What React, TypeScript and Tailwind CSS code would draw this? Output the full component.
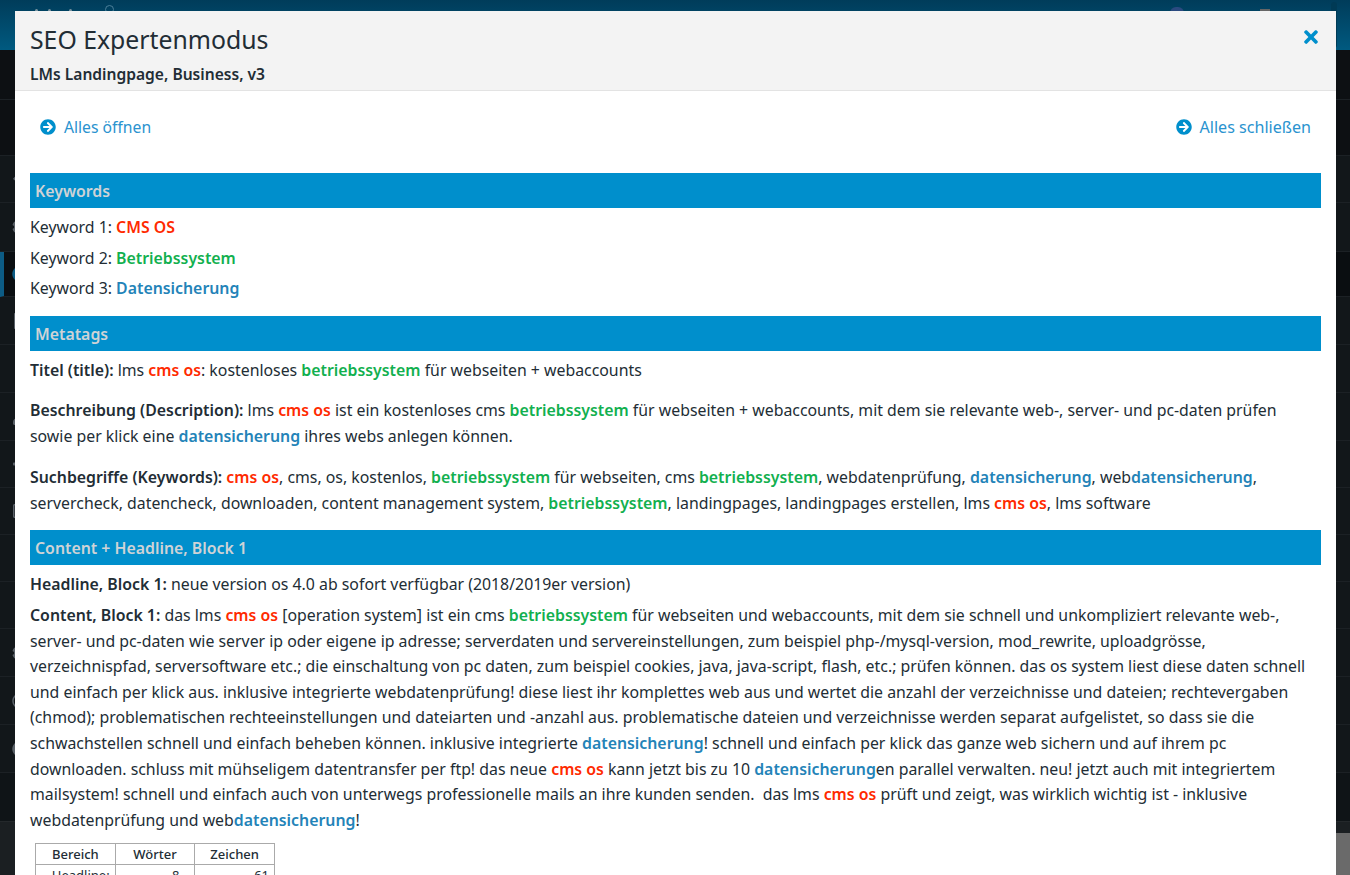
import type { ReactNode } from 'react'
import { FaArrowCircleRight, FaTimes, FaCog, FaUser, FaRegSquare, FaFile, FaCaretLeft, FaArrowUp, FaCircle, FaRegCircle, FaMinus } from 'react-icons/fa'

function Red({ children }: { children: ReactNode }) {
  return <b className="font-semibold text-[#ff2a00]">{children}</b>
}
function Green({ children }: { children: ReactNode }) {
  return <b className="font-semibold text-[#12b04f]">{children}</b>
}
function Blue({ children }: { children: ReactNode }) {
  return <b className="font-semibold text-[#2383b8]">{children}</b>
}

function SectionBar({ title }: { title: string }) {
  return (
    <div className="flex h-[35px] items-center bg-[#008fcc] px-[5px] pt-[3px] text-[15.85px] font-semibold text-[#cfd3d6]">
      {title}
    </div>
  )
}

const navItems = [
  { icon: <FaArrowUp />, h: 'h-[47px]' },
  { icon: <FaCog />, h: 'h-[49px]' },
  { icon: <FaCircle className="text-[#0c5c85]" />, h: 'h-[45px]', active: true },
  { icon: <FaFile />, h: 'h-[48px]' },
  { icon: <FaCaretLeft />, h: 'h-[48px]' },
  { icon: <FaUser />, h: 'h-[48px]' },
  { icon: <FaMinus />, h: 'h-[47px]' },
  { icon: <FaRegSquare />, h: 'h-[47px]' },
  { icon: <FaCaretLeft />, h: 'h-[47px]' },
  { icon: <FaCaretLeft />, h: 'h-[47px]' },
  { icon: <FaCog />, h: 'h-[48px]' },
  { icon: <FaRegCircle />, h: 'h-[48px]' },
  { icon: <FaCircle />, h: 'h-[48px]' },
]

export default function App() {
  return (
    <div className="relative h-[875px] w-[1350px] overflow-hidden bg-[#0d1114] font-['Noto_Sans',sans-serif] text-[15.85px] text-[#222d35]">
      {/* page behind the dialog */}
      <div className="flex h-[50px] items-start bg-gradient-to-b from-[#003c5a] to-[#005a80]">
        <div className="ml-[35px] mt-[9px] size-[3px] rounded-full bg-[#7f97a3]" />
        <div className="ml-[10px] mt-[9px] size-[3px] rounded-full bg-[#7f97a3]" />
        <div className="ml-[18px] mt-[9px] size-[3px] rounded-full bg-[#7f97a3]" />
        <div className="ml-[33px] mt-[5px] size-[9px] rounded-full border border-[#4c7f99]" />
        <div className="ml-[1056px] mt-[7px] h-[10px] w-[14px] rounded-t-md bg-[#2b4a80]" />
        <div className="ml-[76px] mt-[9px] h-[4px] w-[10px] bg-[#666]" />
        <div className="ml-[54px] mt-[17px] h-[13px] w-[3px] bg-[#5b6a73]" />
        <div className="ml-[4px] mt-[2px] h-[46px] w-[6px] rounded-full bg-[#003a55]" />
      </div>
      <div className="flex h-[825px] flex-col bg-[#12171a]">
        <div className="h-[50px] border-b border-[#1c2125] bg-[#0d1013]" />
        <div className="h-[56px] border-b border-[#1c2125] bg-[#0d1013]" />
        {navItems.map((item, i) => (
          <div
            key={i}
            className={`flex items-center border-b border-[#1c2125] pl-[12px] text-[16px] text-[#5a6168] ${item.h} ${item.active ? 'border-l-4 !pl-[8px] border-l-[#0c5c85] bg-[#0a0e11]' : ''}`}
          >
            {item.icon}
          </div>
        ))}
        <div className="h-[49px] border-b border-[#24282b] bg-[#0f1417]" />
        <div className="grow bg-[#1b1f22]" />
      </div>
      <div className="absolute right-0 top-[833px] h-[42px] w-[14px] bg-[#6a6a6a]" />

      {/* dialog */}
      <div className="absolute left-[15px] top-[11px] h-[864px] w-[1321px] overflow-hidden bg-white">
        <div className="relative h-[80px] border-b border-[#e3e3e3] bg-[#f3f3f3] px-[15px]">
          <div className="pt-[10px] text-[24.8px] leading-[36px]">SEO Expertenmodus</div>
          <div className="mt-[6px] text-[15.6px] font-semibold leading-[22px]">LMs Landingpage, Business, v3</div>
          <FaTimes className="absolute right-[15px] top-[16px] text-[#008fcc]" size={20} />
        </div>

        <div className="px-[15px]">
          <div className="flex h-[82px] items-start justify-between px-[10px] pt-[25px] text-[#2a93cf]">
            <div className="flex items-center gap-[8px] text-[15.7px] leading-[22px]">
              <FaArrowCircleRight className="text-[#008fcc]" size={16} />
              Alles öffnen
            </div>
            <div className="flex items-center gap-[8px] text-[16.1px] leading-[22px]">
              <FaArrowCircleRight className="text-[#008fcc]" size={16} />
              Alles schließen
            </div>
          </div>

          <SectionBar title="Keywords" />
          <div className="pt-[4px] leading-[30.5px]">
            <div>Keyword 1: <Red>CMS OS</Red></div>
            <div>Keyword 2: <Green>Betriebssystem</Green></div>
            <div>Keyword 3: <Blue>Datensicherung</Blue></div>
          </div>

          <div className="mt-[12px]"><SectionBar title="Metatags" /></div>
          <div className="pt-[6px] leading-[26px]">
            <p><b className="font-semibold">Titel (title):</b> lms <Red>cms os</Red>: kostenloses <Green>betriebssystem</Green> für webseiten + webaccounts</p>
            <p className="mt-[14px]">
              <b className="font-semibold">Beschreibung (Description):</b> lms <Red>cms os</Red> ist ein kostenloses cms <Green>betriebssystem</Green> für webseiten + webaccounts, mit dem sie relevante web-, server- und pc-daten prüfen<br />
              sowie per klick eine <Blue>datensicherung</Blue> ihres webs anlegen können.
            </p>
            <p className="mt-[15px]">
              <b className="font-semibold">Suchbegriffe (Keywords):</b> <Red>cms os</Red>, cms, os, kostenlos, <Green>betriebssystem</Green> für webseiten, cms <Green>betriebssystem</Green>, webdatenprüfung, <Blue>datensicherung</Blue>, web<Blue>datensicherung</Blue>,<br />
              servercheck, datencheck, downloaden, content management system, <Green>betriebssystem</Green>, landingpages, landingpages erstellen, lms <Red>cms os</Red>, lms software
            </p>
          </div>

          <div className="mt-[14px]"><SectionBar title="Content + Headline, Block 1" /></div>
          <div className="pt-[7px] leading-[25.6px]">
            <p><b className="font-semibold">Headline, Block 1:</b> neue version os 4.0 ab sofort verfügbar (2018/2019er version)</p>
            <p className="mt-[6px]">
              <b className="font-semibold">Content, Block 1:</b> das lms <Red>cms os</Red> [operation system] ist ein cms <Green>betriebssystem</Green> für webseiten und webaccounts, mit dem sie schnell und unkompliziert relevante web-,<br />
              server- und pc-daten wie server ip oder eigene ip adresse; serverdaten und servereinstellungen, zum beispiel php-/mysql-version, mod_rewrite, uploadgrösse,<br />
              verzeichnispfad, serversoftware etc.; die einschaltung von pc daten, zum beispiel cookies, java, java-script, flash, etc.; prüfen können. das os system liest diese daten schnell<br />
              und einfach per klick aus. inklusive integrierte webdatenprüfung! diese liest ihr komplettes web aus und wertet die anzahl der verzeichnisse und dateien; rechtevergaben<br />
              (chmod); problematischen rechteeinstellungen und dateiarten und -anzahl aus. problematische dateien und verzeichnisse werden separat aufgelistet, so dass sie die<br />
              schwachstellen schnell und einfach beheben können. inklusive integrierte <Blue>datensicherung</Blue>! schnell und einfach per klick das ganze web sichern und auf ihrem pc<br />
              downloaden. schluss mit mühseligem datentransfer per ftp! das neue <Red>cms os</Red> kann jetzt bis zu 10 <Blue>datensicherung</Blue>en parallel verwalten. neu! jetzt auch mit integriertem<br />
              mailsystem! schnell und einfach auch von unterwegs professionelle mails an ihre kunden senden.&nbsp; das lms <Red>cms os</Red> prüft und zeigt, was wirklich wichtig ist - inklusive<br />
              webdatenprüfung und web<Blue>datensicherung</Blue>!
            </p>
          </div>

          <table className="ml-[5px] mt-[10px] w-[240px] table-fixed border-collapse text-[13px] leading-[20px]">
            <tbody>
              <tr className="font-medium">
                <td className="border border-[#aaa] text-center">Bereich</td>
                <td className="border border-[#aaa] text-center">Wörter</td>
                <td className="border border-[#aaa] text-center">Zeichen</td>
              </tr>
              <tr>
                <td className="border border-[#aaa] pr-[5px] text-right">Headline:</td>
                <td className="border border-[#aaa] pr-[15px] text-right">8</td>
                <td className="border border-[#aaa] pr-[5px] text-right">61</td>
              </tr>
            </tbody>
          </table>
        </div>
      </div>
    </div>
  )
}
